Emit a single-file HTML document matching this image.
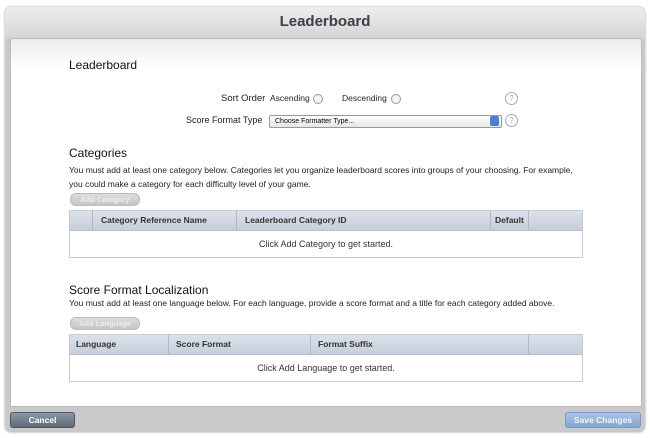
<!DOCTYPE html><html><head><style>
body{margin:0;width:650px;height:438px;background:#fff;font-family:"Liberation Sans",sans-serif;position:relative;overflow:hidden}
.a{position:absolute}
.frame{left:5px;top:7px;width:640px;height:425px;border-radius:6px;background:#c9c9c9;box-shadow:0 0 2px #999}
.hdr{left:5px;top:7px;width:640px;height:32px;border-radius:6px 6px 0 0;background:linear-gradient(#ededed,#d4d4d4)}
.inner{left:10px;top:38px;width:630px;height:367px;background:linear-gradient(#ececec,#fff 30px);border:1px solid #bbb;border-radius:2px}
.t{font-size:10px;color:#222;white-space:nowrap}
.h2{font-size:12px;color:#111}
.radio{width:8px;height:8px;border:1px solid #999;border-radius:50%;background:#f4f4f4}
.q{width:11px;height:11px;border:1px solid #aaa;border-radius:50%;font-size:8px;color:#aaa;text-align:center;line-height:11px}
.btn{height:11px;border-radius:6px;background:linear-gradient(#ddd,#c4c4c4);border:1px solid #bbb;color:#eee;font-size:7.5px;font-weight:bold;text-align:center;line-height:11px}
.tbl{left:69px;width:512px;border:1px solid #c8cdd5;background:#fff}
.th{height:19px;background:linear-gradient(#dbe1ea,#c7cfdb);border-bottom:1px solid #b7bfcb;position:relative}
.th span{position:absolute;top:0;line-height:19px;font-size:8.5px;font-weight:bold;color:#333;height:19px}
.sep{border-left:1px solid #b0b8c4}
.td{height:26px;line-height:26px;text-align:center;font-size:9px;color:#333}
</style></head><body>
<div class="a frame"></div>
<div class="a hdr"></div>
<div class="a" style="left:0;width:650px;top:13px;text-align:center;font-size:15px;font-weight:bold;color:#3b4048">Leaderboard</div>
<div class="a inner"></div>
<div class="a h2" style="left:69px;top:58px">Leaderboard</div>
<div class="a t" style="left:221px;top:93px;font-size:9.5px">Sort Order</div>
<div class="a t" style="left:270px;top:93px;font-size:8.5px">Ascending</div>
<div class="a radio" style="left:313px;top:94px"></div>
<div class="a t" style="left:342px;top:93px;font-size:8.5px">Descending</div>
<div class="a radio" style="left:391px;top:94px"></div>
<div class="a q" style="left:505px;top:92px">?</div>
<div class="a t" style="left:186px;top:115px;font-size:9px">Score Format Type</div>
<div class="a" style="left:269px;top:115px;width:226px;height:11px;border:1px solid #999;border-radius:2px;background:linear-gradient(#fff,#e6e6e6);font-size:7px;line-height:11px;padding-left:5px;box-sizing:content-box">Choose Formatter Type...</div>
<div class="a" style="left:490px;top:116px;width:9px;height:10px;background:#4b7fd0;border-radius:2px"></div>
<div class="a q" style="left:505px;top:114px">?</div>
<div class="a h2" style="left:69px;top:146px">Categories</div>
<div class="a t" style="left:69px;top:163px;font-size:8.5px;line-height:14px;width:505px;white-space:normal">You must add at least one category below. Categories let you organize leaderboard scores into groups of your choosing. For example, you could make a category for each difficulty level of your game.</div>
<div class="a btn" style="left:70px;top:193px;width:68px">Add Category</div>
<div class="a tbl" style="top:210px"><div class="th"><span style="left:0;width:22px"></span><span class="sep" style="left:22px;padding-left:8px">Category Reference Name</span><span class="sep" style="left:166px;padding-left:8px">Leaderboard Category ID</span><span class="sep" style="left:420px;padding-left:4px">Default</span><span class="sep" style="left:458px"></span></div><div class="td">Click Add Category to get started.</div></div>
<div class="a h2" style="left:69px;top:283px">Score Format Localization</div>
<div class="a t" style="left:69px;top:298px;font-size:8.5px">You must add at least one language below. For each language, provide a score format and a title for each category added above.</div>
<div class="a btn" style="left:70px;top:317px;width:68px">Add Language</div>
<div class="a tbl" style="top:334px"><div class="th"><span style="left:6px">Language</span><span class="sep" style="left:98px;padding-left:7px">Score Format</span><span class="sep" style="left:240px;padding-left:7px">Format Suffix</span><span class="sep" style="left:458px"></span></div><div class="td">Click Add Language to get started.</div></div>
<div class="a" style="left:10px;top:412px;width:63px;height:14px;border-radius:3px;background:linear-gradient(#8b96a2,#5f6b78);border:1px solid #4c5560;color:#fff;font-size:8.5px;font-weight:bold;text-align:center;line-height:14px">Cancel</div>
<div class="a" style="left:565px;top:412px;width:74px;height:14px;border-radius:3px;background:linear-gradient(#a9c3e2,#86a7d0);border:1px solid #7d9cc4;color:#eef4fb;font-size:8.5px;font-weight:bold;text-align:center;line-height:14px">Save Changes</div>
</body></html>
